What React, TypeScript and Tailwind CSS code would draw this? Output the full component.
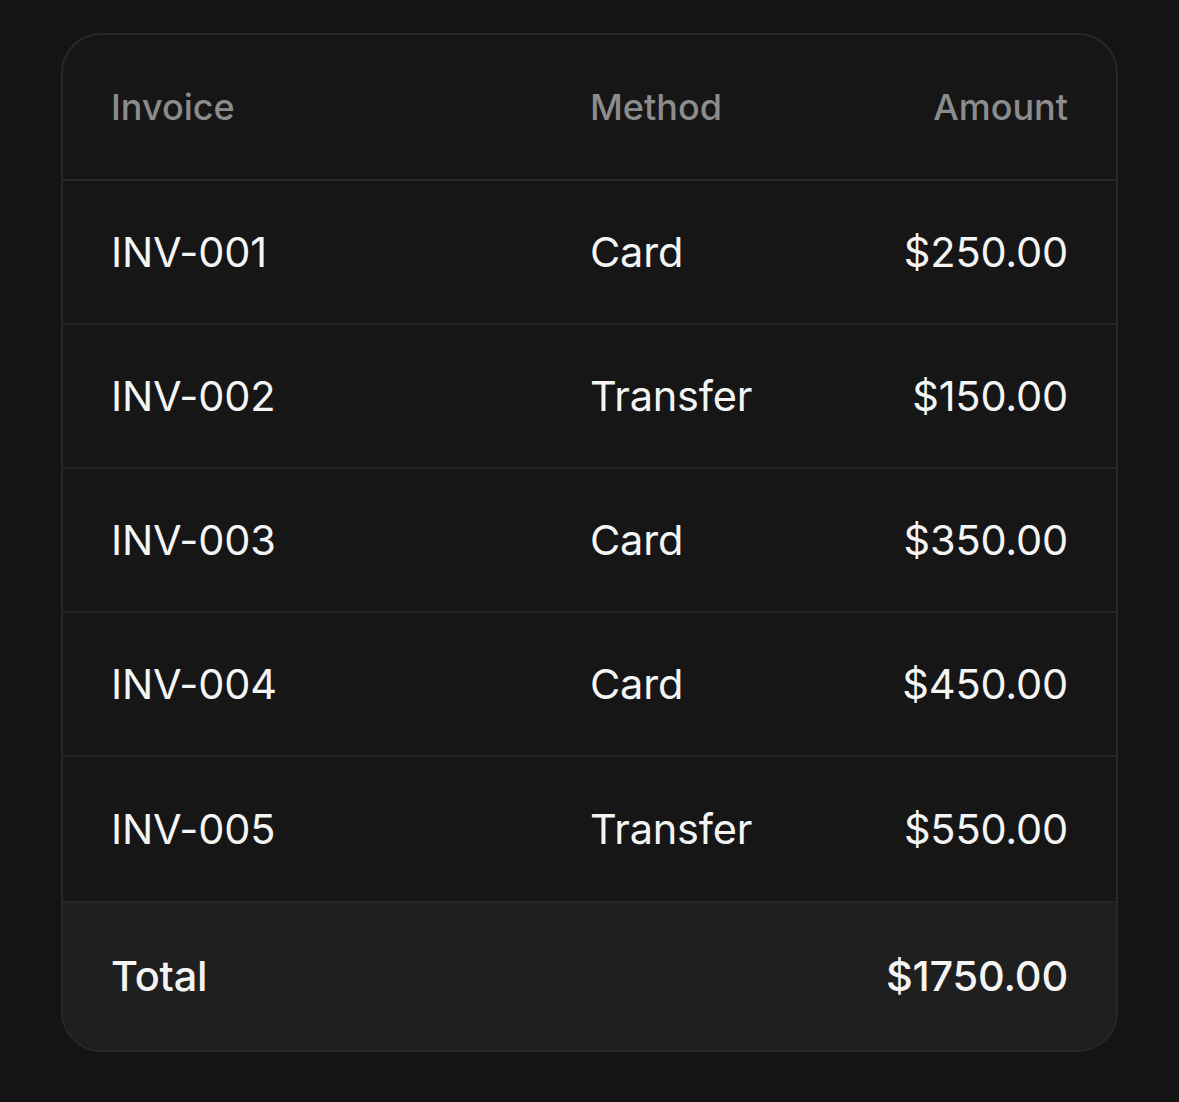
import React from 'react';

const rows = [
    { id: 'INV-001', method: 'Card', amount: '$250.00' },
    { id: 'INV-002', method: 'Transfer', amount: '$150.00' },
    { id: 'INV-003', method: 'Card', amount: '$350.00' },
    { id: 'INV-004', method: 'Card', amount: '$450.00' },
    { id: 'INV-005', method: 'Transfer', amount: '$550.00' },
];

const cols = 'grid grid-cols-[479px_1fr_300px] items-center px-[48px]';

export default function App() {
    return (
        <div className="min-h-[1102px] bg-[#141414] pt-[33px] pl-[61px] font-['Inter',sans-serif]">
            <div className="w-[1057px] rounded-[40px] border-2 border-[#282828] bg-[#161616] overflow-hidden">
                <div className={`${cols} h-[146px] text-[36px] font-medium text-[#8c8c8c] border-b-2 border-[#282828]`}>
                    <span>Invoice</span>
                    <span>Method</span>
                    <span className="text-right">Amount</span>
                </div>
                {rows.map((r, i) => (
                    <div
                        key={r.id}
                        className={`${cols} ${i === rows.length - 1 ? 'h-[146px]' : 'h-[144px]'} text-[41.5px] tracking-[-0.2px] text-[#f4f4f4] border-b-2 border-[#262626]`}
                    >
                        <span>{r.id}</span>
                        <span>{r.method}</span>
                        <span className="text-right">{r.amount}</span>
                    </div>
                ))}
                <div className={`${cols} h-[147px] text-[41.5px] tracking-[-0.2px] font-medium text-[#f4f4f4] bg-[#1f1f1f]`}>
                    <span>Total</span>
                    <span />
                    <span className="text-right">$1750.00</span>
                </div>
            </div>
        </div>
    );
}
